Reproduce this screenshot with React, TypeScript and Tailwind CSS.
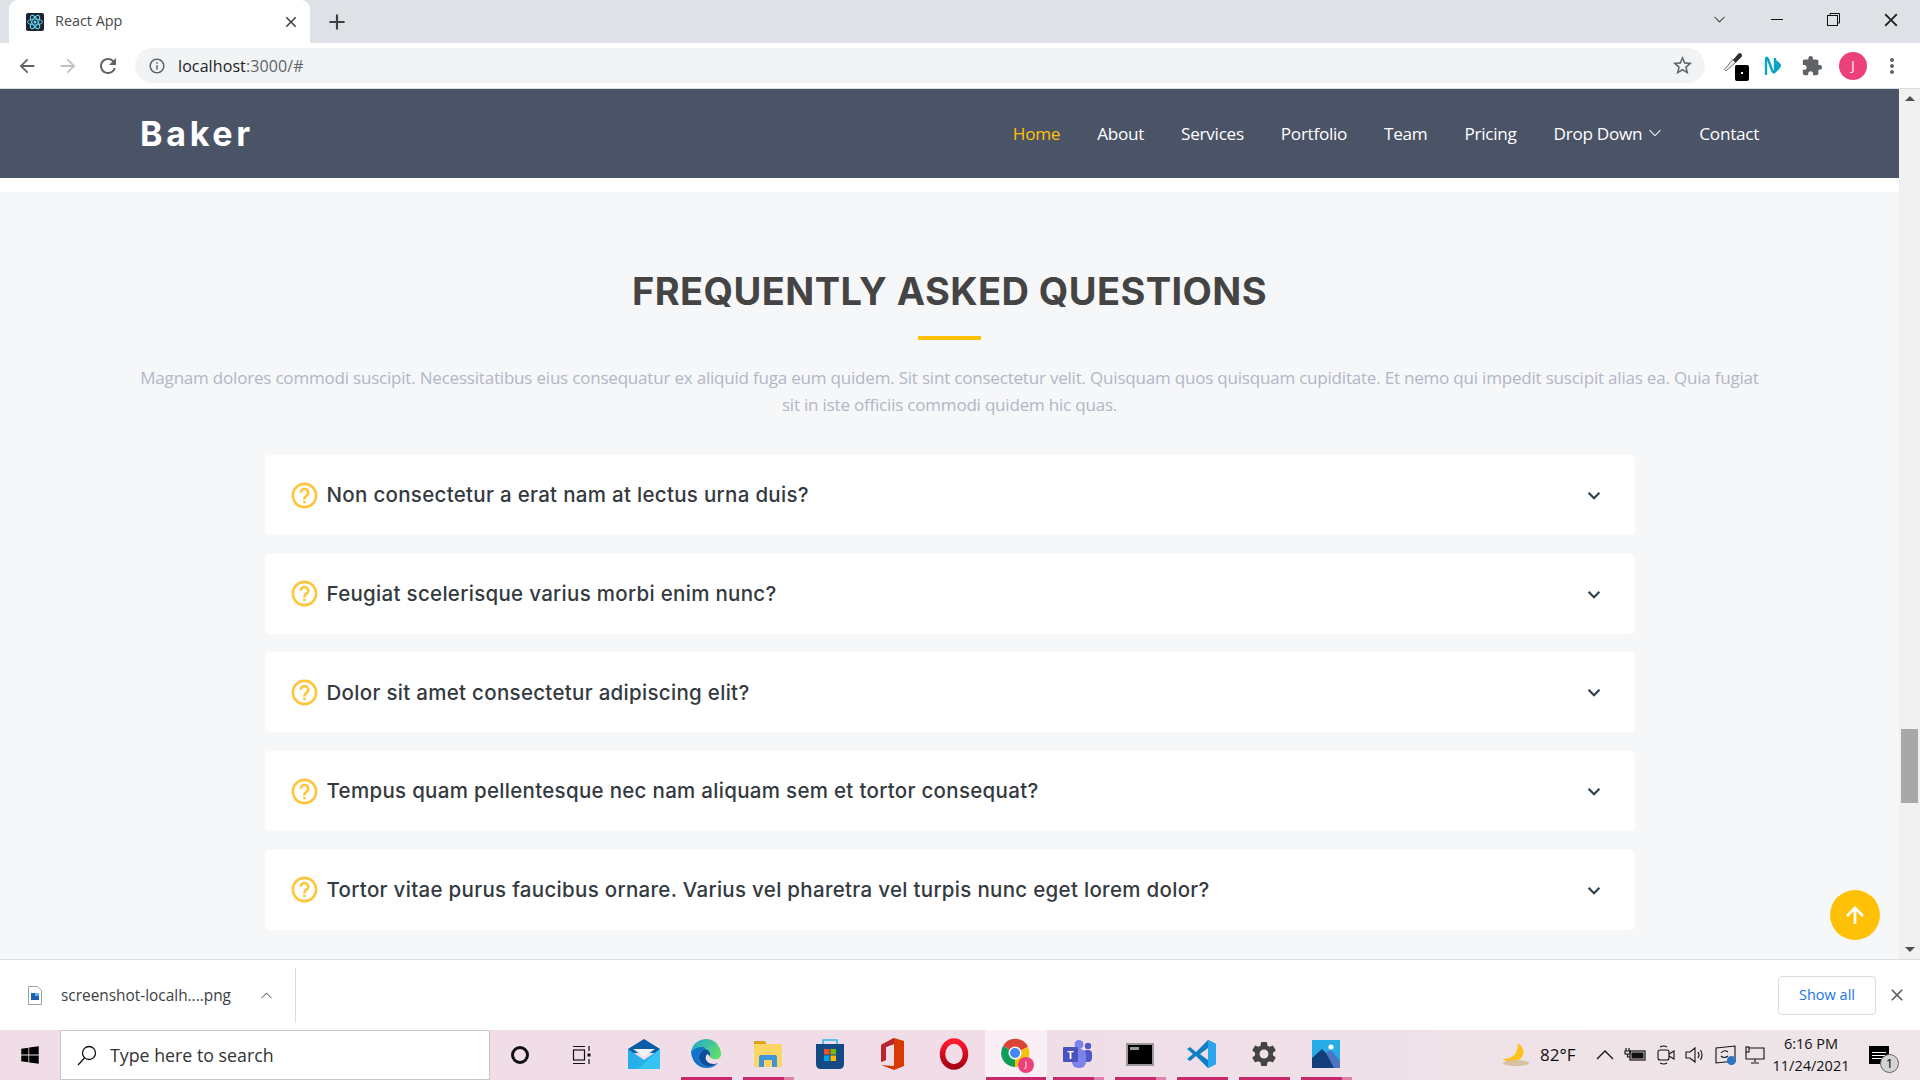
import { BiChevronDown, BiHelpCircle, BiUpArrowAlt } from "react-icons/bi";
import { BsChevronDown, BsChevronUp } from "react-icons/bs";
import { FaWindows } from "react-icons/fa";
import {
  MdAdd,
  MdArrowBack,
  MdArrowForward,
  MdClose,
  MdExtension,
  MdInfoOutline,
  MdMoreVert,
  MdRefresh,
  MdSettings,
  MdStarBorder,
} from "react-icons/md";

const navItems = ["About", "Services", "Portfolio", "Team", "Pricing"];

const questions = [
  "Non consectetur a erat nam at lectus urna duis?",
  "Feugiat scelerisque varius morbi enim nunc?",
  "Dolor sit amet consectetur adipiscing elit?",
  "Tempus quam pellentesque nec nam aliquam sem et tortor consequat?",
  "Tortor vitae purus faucibus ornare. Varius vel pharetra vel turpis nunc eget lorem dolor?",
];

function ReactFavicon() {
  return (
    <svg width="18" height="18" viewBox="0 0 18 18">
      <rect width="18" height="18" rx="2" fill="#20232a" />
      <circle cx="9" cy="9" r="1.5" fill="#61dafb" />
      <g fill="none" stroke="#61dafb" strokeWidth="0.9">
        <ellipse cx="9" cy="9" rx="7.5" ry="3" />
        <ellipse cx="9" cy="9" rx="7.5" ry="3" transform="rotate(60 9 9)" />
        <ellipse cx="9" cy="9" rx="7.5" ry="3" transform="rotate(120 9 9)" />
      </g>
    </svg>
  );
}

function Eyedropper() {
  return (
    <div className="relative w-[26px] h-[30px]">
      <svg width="20" height="22" viewBox="0 0 20 22" className="absolute left-0 top-0">
        <path d="M3 20 L1.5 18.5 L10 8 L13 11 Z" fill="#e8e8e8" stroke="#777" strokeWidth="1" />
        <path d="M10 9 L15 3 Q17 1 18.5 3 Q20 5 17.5 7 L12.5 12 Z" fill="#333" />
      </svg>
      <div className="absolute right-0 bottom-0 w-[14px] h-[16px] bg-black rounded-[2px] flex items-center justify-center">
        <div className="w-[2px] h-[2px] bg-white" />
      </div>
    </div>
  );
}

function TealN() {
  return (
    <svg width="18" height="22" viewBox="0 0 18 22" fill="none">
      <path d="M2 20 V5 Q2 1 4 4 L8 15 Q10 20 11 15 V3" stroke="#0aa6c2" strokeWidth="2.4" />
      <path d="M12 5 Q18 9 17 11 Q16 14 11 18 Z" fill="#0aa6c2" />
    </svg>
  );
}

function MailIcon() {
  return (
    <svg width="32" height="30" viewBox="0 0 32 30">
      <path d="M0 10 L16 0 L32 10 V14 H0 Z" fill="#0a5ea8" />
      <path d="M5 10 H27 L16 18 Z" fill="#f3f3f3" />
      <path d="M0 10 L16 21 L32 10 V30 H0 Z" fill="#28aee8" />
      <path d="M32 10 V30 H10 Z" fill="#36c4f4" />
    </svg>
  );
}

function EdgeIcon() {
  return (
    <svg width="32" height="32" viewBox="0 0 32 32">
      <defs>
        <linearGradient id="edgeTop" x1="0" y1="0" x2="1" y2="0.6">
          <stop offset="0" stopColor="#1fa3d8" />
          <stop offset="1" stopColor="#5fdc6a" />
        </linearGradient>
      </defs>
      <path d="M1 14 C3 -2 28 -5 31 15 C32 22 23 23 20 19 C22 13 12 6 1 14 Z" fill="url(#edgeTop)" />
      <path d="M1 14 C8 7 17 9 15 11 C8 13 7 22 12 26 C17 30 24 28 28 25 C22 33 3 33 1 14 Z" fill="#1173c9" />
      <path d="M15 11 C8 13 7 22 12 26 C17 30 24 28 28 25 C22 28 14 24 16 18 C17 15 19 16 20 19 C21 15 19 12 15 11 Z" fill="#0b4f9e" />
    </svg>
  );
}

function FolderIcon() {
  return (
    <svg width="28" height="26" viewBox="0 0 28 26">
      <path d="M0 1 Q0 0 1 0 H11 L13 4 H0 Z" fill="#dda20f" />
      <rect y="3" width="28" height="23" rx="1" fill="#fbd665" />
      <path d="M5 26 V16 Q5 14 7 14 H21 Q23 14 23 16 V26 H18 V19 H10 V26 Z" fill="#3f94da" />
    </svg>
  );
}

function StoreIcon() {
  return (
    <svg width="30" height="30" viewBox="0 0 30 30">
      <path d="M8 5 V1 H22 V5" fill="none" stroke="#2bb8f2" strokeWidth="1.6" />
      <path d="M1 5 H29 V25 Q29 30 24 30 H6 Q1 30 1 25 Z" fill="#134a86" />
      <rect x="9" y="10" width="5.5" height="5.5" fill="#f25022" />
      <rect x="15.5" y="10" width="5.5" height="5.5" fill="#7fba00" />
      <rect x="9" y="16.5" width="5.5" height="5.5" fill="#00a4ef" />
      <rect x="15.5" y="16.5" width="5.5" height="5.5" fill="#ffb900" />
    </svg>
  );
}

function OfficeIcon() {
  return (
    <svg width="24" height="32" viewBox="0 0 24 32">
      <path d="M14 0 L24 3 V28 L14 32 L1 27 L14 28 V6 L6 9 V22 L1 24 V7 Z" fill="#d83b01" />
      <path d="M14 0 V6 L6 9 V22 L1 24 V7 Z" fill="#b7252f" />
    </svg>
  );
}

function OperaIcon() {
  return (
    <svg width="32" height="32" viewBox="0 0 32 32">
      <defs>
        <linearGradient id="op" x1="0" y1="0" x2="0" y2="1">
          <stop offset="0" stopColor="#ff1b2d" />
          <stop offset="1" stopColor="#a70014" />
        </linearGradient>
      </defs>
      <ellipse cx="16" cy="16" rx="11.5" ry="13" fill="none" stroke="url(#op)" strokeWidth="5.5" />
    </svg>
  );
}

function ChromeIcon() {
  return (
    <div className="relative w-[32px] h-[32px]">
      <svg width="30" height="30" viewBox="0 0 30 30">
        <path d="M15 15 L3 8 A14 14 0 0 1 28 9 Z" fill="#db4437" />
        <path d="M15 15 L28 9 A14 14 0 0 1 15 29 Z" fill="#f4c20d" />
        <path d="M15 15 L15 29 A14 14 0 0 1 3 8 Z" fill="#0f9d58" />
        <circle cx="15" cy="15" r="6.5" fill="#fff" />
        <circle cx="15" cy="15" r="5" fill="#4285f4" />
      </svg>
      <div className="absolute right-[-2px] bottom-[-3px] w-[16px] h-[16px] rounded-full bg-[#ec407a] text-white text-[9px] flex items-center justify-center">
        J
      </div>
    </div>
  );
}

function TeamsIcon() {
  return (
    <svg width="30" height="28" viewBox="0 0 30 28">
      <circle cx="25" cy="6" r="3.2" fill="#5059c9" />
      <rect x="20" y="10" width="9" height="12" rx="4" fill="#5059c9" />
      <circle cx="16" cy="4.5" r="4.5" fill="#7b83eb" />
      <rect x="9" y="9" width="14" height="19" rx="6" fill="#7b83eb" />
      <rect x="0" y="7" width="15" height="15" rx="1" fill="#4b53bc" />
      <text x="7.5" y="18.5" textAnchor="middle" fontSize="11" fontWeight="700" fill="#fff" fontFamily="Open Sans, sans-serif">
        T
      </text>
    </svg>
  );
}

function TerminalIcon() {
  return (
    <div className="w-[28px] h-[23px] bg-black border-2 border-[#9a9a9a] relative">
      <div className="absolute left-[2px] top-[2px] w-[9px] h-[3px] bg-[#999]" />
    </div>
  );
}

function VscodeIcon() {
  return (
    <svg width="30" height="30" viewBox="0 0 30 30">
      <path d="M21 1 L29 5 V25 L21 29 L9 17 L3 22 L0 20 L6 15 L0 10 L3 8 L9 13 Z M21 9 L13 15 L21 21 Z" fill="#0f7fc4" fillRule="evenodd" />
      <path d="M21 1 L29 5 V25 L21 29 V21 V9 Z" fill="#2aa5ee" />
    </svg>
  );
}

function PhotosIcon() {
  return (
    <svg width="28" height="28" viewBox="0 0 28 28">
      <rect width="28" height="28" rx="1" fill="#26ade8" />
      <circle cx="19" cy="7" r="2.6" fill="#fff" />
      <path d="M0 18 L10 9 L20 19 L28 26 V28 H0 Z" fill="#123e79" />
      <path d="M14 13 L19 10 L28 21 V28 H22 Z" fill="#4d74c4" />
    </svg>
  );
}

function CortanaIcon() {
  return <div className="w-[18px] h-[18px] rounded-full border-[3px] border-[#111]" />;
}

function TaskViewIcon() {
  return (
    <svg width="20" height="20" viewBox="0 0 20 20" fill="none" stroke="#111" strokeWidth="1.2">
      <path d="M1 1.5 H13 M1 18.5 H13" />
      <rect x="1.5" y="5" width="11" height="10" />
      <path d="M17 1 V6 M17 14 V19" />
      <rect x="15.5" y="8.5" width="3" height="3" fill="#111" stroke="none" />
    </svg>
  );
}

function TaskSlot({ children, bar, tail, active }: { children: React.ReactNode; bar?: boolean; tail?: boolean; active?: boolean }) {
  return (
    <div className={`relative w-[62px] h-full flex items-center justify-center ${active ? "bg-[#f9eff4]" : ""}`}>
      <div className="pb-[2px] flex items-center justify-center">{children}</div>
      {bar && (
        <div className={`absolute bottom-0 h-[3px] flex ${active ? "w-[60px] left-[1px]" : "w-[51px] left-[6px]"}`}>
          <div className={`h-full bg-[#c62a6c] ${tail ? "w-[41px]" : "w-full"}`} />
          {tail && <div className="h-full w-[10px] bg-[#de82ab]" />}
        </div>
      )}
    </div>
  );
}

function TrayIcons() {
  return (
    <div className="flex items-center gap-[9.5px] text-[#111]">
      <svg width="20" height="14" viewBox="0 0 20 14" fill="none" stroke="#111" strokeWidth="1.3">
        <path d="M2 11 L10 3 L18 11" />
      </svg>
      <svg width="22" height="14" viewBox="0 0 22 14" fill="none" stroke="#111" strokeWidth="1.2">
        <path d="M2 0 V3 M5 0 V3 M1 3 H6 V6 H1 Z M3.5 6 V9 H6" />
        <rect x="6" y="3" width="15" height="9" />
        <rect x="8" y="5" width="11" height="5" fill="#111" />
      </svg>
      <svg width="20" height="20" viewBox="0 0 20 20" fill="none" stroke="#111" strokeWidth="1.1">
        <rect x="2" y="5" width="11" height="10" rx="2" />
        <path d="M13 9 L18 6 V14 L13 11" />
        <path d="M4 2 Q8 0 11 2 M4 18 Q8 20 11 18" />
      </svg>
      <svg width="20" height="20" viewBox="0 0 20 20" fill="none" stroke="#111" strokeWidth="1.1">
        <path d="M1 7 H5 L10 3 V17 L5 13 H1 Z" />
        <path d="M13 7 Q15 10 13 13 M15.5 5 Q18.5 10 15.5 15" />
      </svg>
      <div className="relative w-[21px] h-[20px]">
        <svg width="21" height="20" viewBox="0 0 21 20" fill="none" stroke="#111" strokeWidth="1.1">
          <path d="M1 3 L20 1 V16 L1 18 Z" />
          <path d="M6 8 Q9 4 13 7 M13 11 Q9 14 6 11" />
        </svg>
        <div className="absolute right-0 bottom-0 w-[9px] h-[9px] rounded-full bg-[#2f74c0]" />
      </div>
      <svg width="20" height="18" viewBox="0 0 20 18" fill="none" stroke="#111" strokeWidth="1.1">
        <path d="M4 2 H19 V13 H1 V6" />
        <rect x="1" y="1" width="3" height="5" />
        <path d="M10 13 V16 M6 17 H14" />
      </svg>
    </div>
  );
}

function BrowserChrome() {
  return (
    <>
      <div className="h-[43px] bg-[#dee1e6] flex items-end shrink-0">
        <div className="ml-[9px] w-[301px] h-[43px] bg-white rounded-t-[9px] flex items-center pl-[17px] pr-[10px]">
          <ReactFavicon />
          <span className="ml-[11px] text-[14.4px] text-[#45474a] pb-[2px]">React App</span>
          <MdClose className="ml-auto text-[18px] text-[#3c4043]" />
        </div>
        <div className="h-[43px] flex items-center ml-[14px]">
          <MdAdd className="text-[26px] text-[#3c4043]" />
        </div>
        <div className="ml-auto h-[43px] flex items-center text-[#222] pb-[4px]">
          <BsChevronDown className="text-[13px] mr-[45px]" />
          <div className="w-[12px] h-px bg-[#111] mr-[44px]" />
          <svg width="13" height="13" viewBox="0 0 13 13" fill="none" stroke="#111" className="mr-[40px]">
            <rect x="0.5" y="2.5" width="10" height="10" />
            <path d="M3 2.5 V0.5 H12.5 V10 H10.5" />
          </svg>
          <MdClose className="text-[22px] text-[#222] mr-[18px] font-light" />
        </div>
      </div>
      <div className="h-[46px] bg-white border-b border-[#dadce0] flex items-center shrink-0">
        <MdArrowBack className="ml-[16px] text-[22px] text-[#5f6368]" />
        <MdArrowForward className="ml-[19px] text-[22px] text-[#bfc1c4]" />
        <MdRefresh className="ml-[17px] text-[24px] text-[#5f6368]" />
        <div className="ml-[15px] w-[1570px] h-[35px] rounded-full bg-[#f1f3f4] flex items-center pl-[13px] pr-[11px]">
          <MdInfoOutline className="text-[18px] text-[#5f6368]" />
          <span className="ml-[12px] text-[16px] tracking-[0.1px] text-[#202124]">
            localhost<span className="text-[#5f6368]">:3000/#</span>
          </span>
          <MdStarBorder className="ml-auto text-[23px] text-[#5f6368]" />
        </div>
        <div className="flex items-center ml-[18px] text-[#5f6368]">
          <Eyedropper />
          <div className="ml-[15px]">
            <TealN />
          </div>
          <MdExtension className="ml-[19px] text-[22px]" />
          <div className="ml-[16px] w-[28px] h-[28px] rounded-full bg-[#ec407a] text-white text-[13px] flex items-center justify-center">J</div>
          <MdMoreVert className="ml-[13px] text-[24px]" />
        </div>
      </div>
    </>
  );
}

function Page() {
  return (
    <div className="flex-1 flex overflow-hidden">
      <div className="relative flex-1 flex flex-col overflow-hidden">
        <header className="h-[89px] bg-[#4b5366] flex items-center justify-between px-[140px] shrink-0">
          <span className="text-[34px] font-bold tracking-[3.7px] text-white font-['Inter',sans-serif]">Baker</span>
          <nav className="flex items-center gap-[37px] text-[17.2px] text-white tracking-[-0.3px]">
            <span className="text-[#ffc107]">Home</span>
            {navItems.map((item) => (
              <span key={item}>{item}</span>
            ))}
            <span className="flex items-center gap-[6px]">
              Drop Down <BsChevronDown className="text-[14px]" />
            </span>
            <span>Contact</span>
          </nav>
        </header>
        <div className="h-[14px] bg-white shrink-0" />
        <section className="flex-1 bg-[#f6f7f9] pt-[76px] flex flex-col items-center">
          <h2 className="text-[38px] leading-[46px] font-bold text-[#444] tracking-[0.42px] font-['Inter',sans-serif]">FREQUENTLY ASKED QUESTIONS</h2>
          <div className="mt-[22px] w-[63px] h-[4px] bg-[#ffc107]" />
          <p className="mt-[25px] px-[139px] text-center text-[17px] leading-[26.5px] text-[#b2b6c6] tracking-[-0.2px]">
            Magnam dolores commodi suscipit. Necessitatibus eius consequatur ex aliquid fuga eum quidem. Sit sint consectetur velit. Quisquam quos quisquam cupiditate. Et nemo qui impedit suscipit alias ea. Quia fugiat sit in iste officiis commodi quidem hic quas.
          </p>
          <div className="mt-[37px] w-[1370px] flex flex-col gap-[18.7px]">
            {questions.map((q) => (
              <div key={q} className="h-[80px] bg-white rounded-[5px] flex items-center pl-[24.5px] pr-[27.5px]">
                <BiHelpCircle className="text-[31px] text-[#ffc43a] shrink-0" />
                <span className="ml-[6.5px] pt-[1px] text-[20.5px] tracking-[0.3px] font-medium text-[#343a40] font-['Inter',sans-serif]">{q}</span>
                <BiChevronDown className="ml-auto text-[26px] text-[#2c3e50]" />
              </div>
            ))}
          </div>
        </section>
        <div className="absolute right-[19px] bottom-[19px] w-[50px] h-[50px] rounded-full bg-[#ffc107] flex items-center justify-center pt-[1px]">
          <BiUpArrowAlt className="text-[32px] text-white" />
        </div>
      </div>
      <div className="w-[21px] bg-[#f1f1f1] flex flex-col items-center shrink-0">
        <div className="mt-[7px] w-0 h-0 border-x-[5px] border-x-transparent border-b-[5px] border-b-[#505050]" />
        <div className="mt-[628px] w-[17px] h-[74px] bg-[#a8a8a8]" />
        <div className="mt-auto mb-[7px] w-0 h-0 border-x-[5px] border-x-transparent border-t-[5px] border-t-[#505050]" />
      </div>
    </div>
  );
}

function DownloadBar() {
  return (
    <div className="h-[71px] bg-white border-t border-[#dadce0] flex items-center shrink-0">
      <svg width="14" height="19" viewBox="0 0 14 19" className="ml-[28px]">
        <path d="M0.5 0.5 H9.5 L13.5 4.5 V18.5 H0.5 Z" fill="#fff" stroke="#9aa0a6" />
        <rect x="3" y="7" width="8" height="7" fill="#1f5fae" />
        <rect x="7" y="7" width="4" height="3" fill="#5db7ee" />
      </svg>
      <span className="ml-[19px] pt-[1px] text-[15.4px] text-[#3c4043]">screenshot-localh....png</span>
      <BsChevronUp className="ml-[29px] text-[13px] text-[#5f6368]" />
      <div className="ml-[22px] w-px h-[55px] bg-[#dadce0]" />
      <div className="ml-auto w-[98px] h-[39px] border border-[#dadce0] rounded-[4px] flex items-center justify-center text-[14.5px] text-[#1a73e8]">
        Show all
      </div>
      <MdClose className="ml-[11px] mr-[13px] text-[20px] text-[#5f6368]" />
    </div>
  );
}

function Taskbar() {
  return (
    <div className="h-[50px] bg-gradient-to-r from-[#f0dde7] via-[#f0dde7] to-[#eee6e8] flex items-center shrink-0">
      <div className="w-[60px] flex justify-center">
        <FaWindows className="text-[20px] text-black" />
      </div>
      <div className="w-[430px] h-full bg-white border border-[#c8c8c8] flex items-center pl-[15px]">
        <svg width="22" height="22" viewBox="0 0 22 22" fill="none" stroke="#111" strokeWidth="1.3">
          <circle cx="13" cy="9" r="6.5" />
          <path d="M8.5 14 L2 21" />
        </svg>
        <span className="ml-[12px] text-[17.8px] text-[#333]">Type here to search</span>
      </div>
      <div className="w-[60px] flex justify-center">
        <CortanaIcon />
      </div>
      <div className="w-[63px] flex justify-center">
        <TaskViewIcon />
      </div>
      <TaskSlot>
        <MailIcon />
      </TaskSlot>
      <TaskSlot bar>
        <EdgeIcon />
      </TaskSlot>
      <TaskSlot bar tail>
        <FolderIcon />
      </TaskSlot>
      <TaskSlot>
        <StoreIcon />
      </TaskSlot>
      <TaskSlot>
        <OfficeIcon />
      </TaskSlot>
      <TaskSlot>
        <OperaIcon />
      </TaskSlot>
      <TaskSlot bar active>
        <ChromeIcon />
      </TaskSlot>
      <TaskSlot bar tail>
        <TeamsIcon />
      </TaskSlot>
      <TaskSlot bar tail>
        <TerminalIcon />
      </TaskSlot>
      <TaskSlot bar>
        <VscodeIcon />
      </TaskSlot>
      <TaskSlot bar>
        <MdSettings className="text-[30px] text-[#444]" />
      </TaskSlot>
      <TaskSlot bar tail>
        <PhotosIcon />
      </TaskSlot>
      <div className="ml-auto flex items-center h-full">
        <svg width="30" height="26" viewBox="0 0 30 26">
          <path d="M19 1 Q29 9 21 17 Q12 22 3 17 Q13 17 17 11 Q19 6 19 1 Z" fill="#fcc21b" />
          <ellipse cx="17" cy="21" rx="13" ry="3" fill="#d8c0a0" />
        </svg>
        <span className="ml-[11px] text-[17px] text-[#111]">82°F</span>
        <div className="ml-[19px]">
          <TrayIcons />
        </div>
        <div className="ml-[6px] w-[80px] flex flex-col items-center text-[14.5px] leading-[22px] text-[#111]">
          <span>6:16 PM</span>
          <span>11/24/2021</span>
        </div>
        <div className="relative ml-[18px] mr-[31px] w-[20px] h-[18px] bg-black flex flex-col justify-center gap-[2px] px-[3px]">
          <div className="h-px bg-white" />
          <div className="h-px bg-white" />
          <div className="h-px bg-white" />
          <div className="absolute right-[-10px] bottom-[-9px] w-[19px] h-[19px] rounded-full bg-[#d4d4d4] border border-[#666] text-[13px] leading-none text-black flex items-center justify-center">
            1
          </div>
        </div>
      </div>
    </div>
  );
}

export default function App() {
  return (
    <div className="w-[1920px] h-[1080px] flex flex-col overflow-hidden font-['Open_Sans',sans-serif]">
      <BrowserChrome />
      <Page />
      <DownloadBar />
      <Taskbar />
    </div>
  );
}
